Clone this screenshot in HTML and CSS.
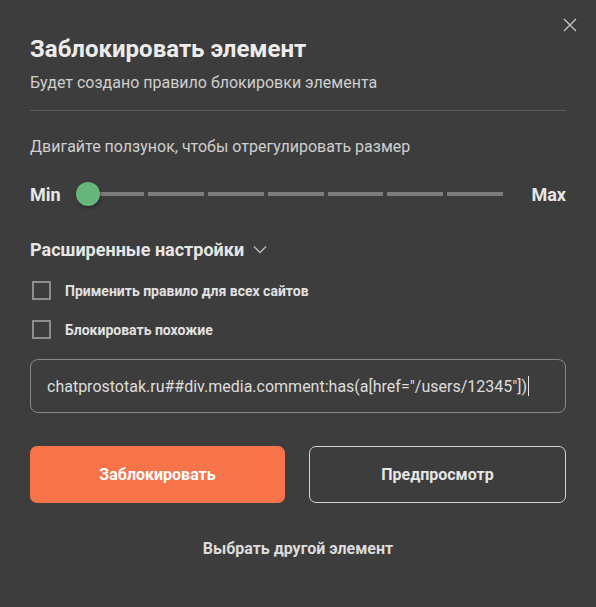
FILE: index.html
```html
<!DOCTYPE html>
<html lang="ru">
<head>
<meta charset="utf-8">
<link rel="stylesheet" href="styles.css">
</head>
<body>
<div class="dialog">
  <button class="close" aria-label="Закрыть">
    <svg width="14" height="14" viewBox="0 0 14 14"><path d="M1 1L13 13M13 1L1 13" stroke="#c8c8c8" stroke-width="1.3" fill="none"/></svg>
  </button>
  <h1 class="title">Заблокировать элемент</h1>
  <p class="subtitle">Будет создано правило блокировки элемента</p>
  <div class="divider"></div>
  <p class="hint">Двигайте ползунок, чтобы отрегулировать размер</p>
  <div class="slider">
    <span class="slider-label">Min</span>
    <div class="track">
      <span class="seg"></span><span class="seg"></span><span class="seg"></span><span class="seg"></span><span class="seg"></span><span class="seg"></span><span class="seg"></span>
      <span class="thumb"></span>
    </div>
    <span class="slider-label">Max</span>
  </div>
  <div class="advanced">
    <span>Расширенные настройки</span>
    <svg width="14" height="9" viewBox="0 0 14 9"><path d="M1 1.5L7 7.5L13 1.5" stroke="#bdbdbd" stroke-width="1.3" fill="none"/></svg>
  </div>
  <label class="check"><span class="box"></span><span>Применить правило для всех сайтов</span></label>
  <label class="check"><span class="box"></span><span>Блокировать похожие</span></label>
  <div class="rule"><span>chatprostotak.ru##div.media.comment:has(a[href="/users/12345"])</span><span class="caret"></span></div>
  <div class="actions">
    <button class="btn btn-primary">Заблокировать</button>
    <button class="btn btn-outline">Предпросмотр</button>
  </div>
  <div class="other">Выбрать другой элемент</div>
</div>
</body>
</html>
```
FILE: styles.css
```css
* { box-sizing: border-box; }
html, body { margin: 0; padding: 0; }
body {
  background: #3d3d3d;
  font-family: Roboto, "Liberation Sans", sans-serif;
  color: #e6e6e6;
  width: 596px;
  height: 607px;
  overflow: hidden;
}
.dialog {
  position: relative;
  padding: 35px 30px 0 30px;
  display: flex;
  flex-direction: column;
}
.close {
  position: absolute;
  top: 18px;
  right: 19px;
  width: 14px;
  height: 14px;
  padding: 0;
  border: 0;
  background: none;
  display: flex;
}
.title {
  margin: 0;
  font-size: 24px;
  line-height: 28px;
  font-weight: 700;
  color: #ececec;
}
.subtitle {
  margin: 10px 0 0;
  font-size: 16px;
  line-height: 20px;
  color: #cfcfcf;
}
.divider {
  margin-top: 17px;
  height: 1px;
  background: #5e5e5e;
}
.hint {
  margin: 26px 0 0;
  font-size: 16px;
  line-height: 20px;
  color: #cfcfcf;
}
.slider {
  margin-top: 25px;
  display: flex;
  align-items: center;
  height: 24px;
}
.slider-label {
  font-size: 18px;
  font-weight: 700;
  color: #e6e6e6;
}
.track {
  position: relative;
  flex: 1;
  display: flex;
  gap: 4px;
  margin: 0 28px 0 27px;
  height: 4px;
}
.seg {
  flex: 1;
  background: #7c7c7c;
}
.thumb {
  position: absolute;
  left: -12px;
  top: -10px;
  width: 24px;
  height: 24px;
  border-radius: 50%;
  background: #66b57a;
  box-shadow: 1px 2px 3px rgba(0,0,0,0.35);
}
.advanced {
  margin-top: 33px;
  display: flex;
  align-items: center;
  gap: 9px;
  font-size: 18px;
  line-height: 21px;
  font-weight: 700;
  color: #e6e6e6;
}
.check {
  display: flex;
  align-items: center;
  gap: 14px;
  margin-top: 21px;
  padding-left: 2px;
  font-size: 14px;
  font-weight: 700;
  color: #e2e2e2;
}
.check + .check { margin-top: 20px; }
.box {
  width: 19px;
  height: 19px;
  border: 2px solid #8e8e8e;
  flex: none;
}
.rule {
  margin-top: 20px;
  height: 54px;
  border: 1px solid #888;
  border-radius: 8px;
  display: flex;
  align-items: center;
  padding-left: 16px;
  font-size: 16px;
  color: #dedede;
}
.caret {
  width: 1px;
  height: 20px;
  background: #e6e6e6;
  margin-left: 1px;
}
.actions {
  margin-top: 33px;
  display: flex;
  gap: 24px;
}
.btn {
  flex: 1;
  height: 57px;
  border-radius: 7px;
  font-family: inherit;
  font-size: 16px;
  font-weight: 700;
}
.btn-primary {
  background: #f7744b;
  border: 0;
  color: #fff;
}
.btn-outline {
  background: transparent;
  border: 1px solid #d4d4d4;
  color: #e6e6e6;
}
.other {
  margin-top: 36px;
  text-align: center;
  font-size: 16px;
  font-weight: 700;
  color: #dcdcdc;
}
```
